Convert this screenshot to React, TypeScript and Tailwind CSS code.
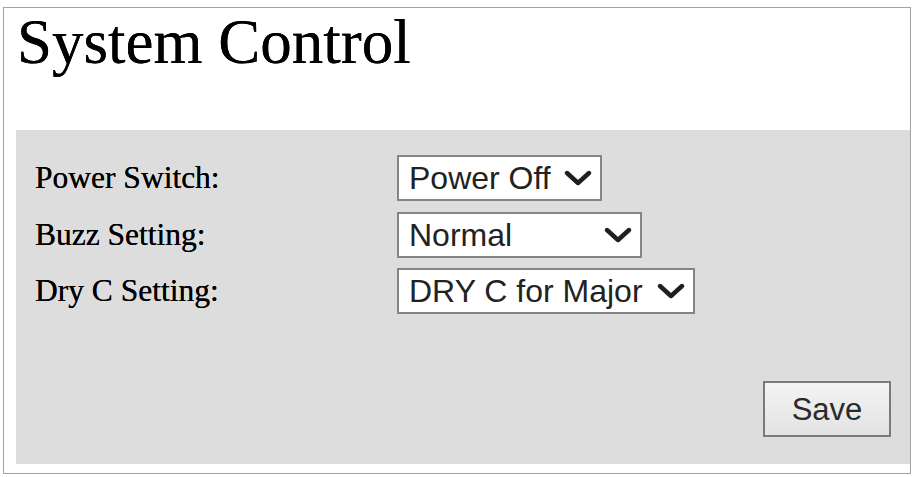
import React from "react";

function Chevron() {
  return (
    <svg width="28" height="16" viewBox="0 0 28 16" className="shrink-0">
      <polyline points="3,3 14,13 25,3" fill="none" stroke="#1f1f1f" strokeWidth="4.4" strokeLinecap="round" strokeLinejoin="round" />
    </svg>
  );
}

function FakeSelect({ value, width }: { value: string; width: string }) {
  return (
    <div
      className={`${width} h-[46px] border-2 border-[#858585] bg-white flex items-center justify-between pl-[10px] pr-[8px] text-[32px] text-[#222] font-['Liberation_Sans',Arial,sans-serif] leading-none`}
    >
      <span className="whitespace-nowrap">{value}</span>
      <Chevron />
    </div>
  );
}

function Row({ label, value }: { label: string; value: string }) {
  return (
    <div className="flex items-center h-[46px]">
      <div className="w-[362px] text-[31.5px] leading-none text-black font-['Liberation_Serif','Times_New_Roman',serif] whitespace-nowrap [text-shadow:0_0_0.4px_#000]">
        {label}
      </div>
      {value === "Power Off" ? (
        <FakeSelect value={value} width="w-[205px]" />
      ) : value === "Normal" ? (
        <FakeSelect value={value} width="w-[245px]" />
      ) : (
        <FakeSelect value={value} width="w-[298px]" />
      )}
    </div>
  );
}

export default function App() {
  return (
    <div className="w-[914px] h-[477px] bg-white pt-[7px] pl-[3px]">
      <div className="w-[908px] h-[467px] border border-[#a3a3a3] flex flex-col">
        <div className="h-[122px] pl-[13px] pt-[3px]">
          <h1 className="text-[63px] leading-none font-normal text-black font-['Liberation_Serif','Times_New_Roman',serif] whitespace-nowrap [text-shadow:0_0_0.5px_#000]">
            System Control
          </h1>
        </div>
        <div className="ml-[12px] h-[334px] bg-[#dddddd] flex flex-col pl-[19px] pt-[25px] pr-[19px] pb-[27px]">
          <div className="flex flex-col gap-[10.5px]">
            <Row label="Power Switch:" value="Power Off" />
            <Row label="Buzz Setting:" value="Normal" />
            <Row label="Dry C Setting:" value="DRY C for Major" />
          </div>
          <div className="mt-auto flex justify-end">
            <button className="w-[128px] h-[56px] border-2 border-[#7a7a7a] bg-gradient-to-b from-[#f3f3f3] to-[#e3e3e3] text-[31px] text-[#2a2a2a] font-['Liberation_Sans',Arial,sans-serif] leading-none flex items-center justify-center">
              Save
            </button>
          </div>
        </div>
      </div>
    </div>
  );
}
